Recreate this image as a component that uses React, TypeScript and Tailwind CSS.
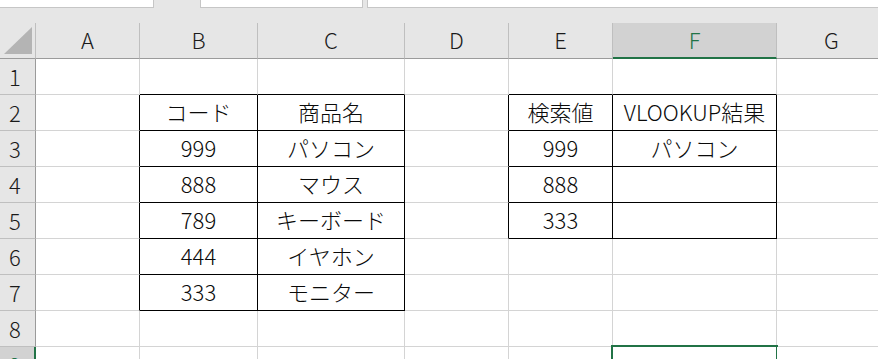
const COLS = ["A", "B", "C", "D", "E", "F", "G"];
const ROWS = [1, 2, 3, 4, 5, 6, 7, 8, 9];

const VALUES: Record<string, string> = {
  B2: "コード",
  C2: "商品名",
  B3: "999",
  C3: "パソコン",
  B4: "888",
  C4: "マウス",
  B5: "789",
  C5: "キーボード",
  B6: "444",
  C6: "イヤホン",
  B7: "333",
  C7: "モニター",
  E2: "検索値",
  F2: "VLOOKUP結果",
  E3: "999",
  F3: "パソコン",
  E4: "888",
  E5: "333",
};

// bordered ranges, column index A=0
const TABLES = [
  { c0: 1, c1: 2, r0: 2, r1: 7 },
  { c0: 4, c1: 5, r0: 2, r1: 5 },
];

const inTable = (c: number, r: number) =>
  TABLES.some((t) => c >= t.c0 && c <= t.c1 && r >= t.r0 && r <= t.r1);

const SELECTED_COL = 5;
const SELECTED_ROW = 9;

function Corner() {
  return (
    <div className="h-[36px] border-r border-b border-r-[#bfbfbf] border-b-[#9b9b9b] bg-[#e6e6e6]">
      <svg width="35" height="35" viewBox="0 0 35 35">
        <polygon points="32,4 32,31 4,31" fill="#b4b4b4" />
      </svg>
    </div>
  );
}

function ColHeader({ label, selected }: { label: string; selected: boolean }) {
  if (selected) {
    return (
      <div className="flex h-[36px] items-center justify-center border-r border-b-2 border-r-[#bfbfbf] border-b-[#217346] bg-[#d2d2d2] pb-[2px] text-[#217346]">
        {label}
      </div>
    );
  }
  return (
    <div className="flex h-[36px] items-center justify-center border-r border-b border-r-[#bfbfbf] border-b-[#9b9b9b] bg-[#e6e6e6] pb-[3px] text-[#1a1a1a]">
      {label}
    </div>
  );
}

function RowHeader({ n }: { n: number }) {
  if (n === SELECTED_ROW) {
    return (
      <div className="flex h-[36px] items-center border-r-2 border-b border-r-[#217346] border-b-[#bfbfbf] bg-[#d2d2d2] pb-[2px] pl-[9px] text-[#217346]">
        {n}
      </div>
    );
  }
  return (
    <div className="flex h-[36px] items-center border-r border-b border-r-[#9b9b9b] border-b-[#bfbfbf] bg-[#e6e6e6] pb-[2px] pl-[9px] text-[#1a1a1a]">
      {n}
    </div>
  );
}

function Cell({ c, r }: { c: number; r: number }) {
  const rightBlack = inTable(c, r) || inTable(c + 1, r);
  const bottomBlack = inTable(c, r) || inTable(c, r + 1);
  const selected = c === SELECTED_COL && r === SELECTED_ROW;
  return (
    <div
      className={`relative flex h-[36px] items-center justify-center border-r border-b bg-white pb-[3px] text-[#0a0a0a] ${
        rightBlack ? "border-r-black" : "border-r-[#d4d4d4]"
      } ${bottomBlack ? "border-b-black" : "border-b-[#d4d4d4]"}`}
    >
      {VALUES[`${COLS[c]}${r}`]}
      {selected && (
        <div className="absolute -top-[2px] -right-[2px] -left-[2px] h-[40px] border-2 border-[#217346]" />
      )}
    </div>
  );
}

export default function App() {
  return (
    <div
      className="h-[359px] w-[878px] overflow-hidden bg-[#e6e6e6] text-[22px] leading-none font-light"
      style={{ fontFamily: '"Noto Sans CJK JP", "Noto Sans", sans-serif' }}
    >
      {/* formula bar edge */}
      <div className="flex h-[8px]">
        <div className="w-[154px] border-r border-b border-[#c6c6c6] bg-white" />
        <div className="w-[46px]" />
        <div className="w-[163px] border-x border-b border-[#c6c6c6] bg-white" />
        <div className="w-[4px]" />
        <div className="flex-1 border-l border-b border-[#c6c6c6] bg-white" />
      </div>
      <div className="h-[15px]" />

      <div className="grid grid-cols-[36px_104px_118px_147px_104px_104px_164px_110px]">
        <Corner />
        {COLS.map((c, i) => (
          <ColHeader key={c} label={c} selected={i === SELECTED_COL} />
        ))}
        {ROWS.map((r) => (
          <div key={r} className="contents">
            <RowHeader n={r} />
            {COLS.map((_, c) => (
              <Cell key={c} c={c} r={r} />
            ))}
          </div>
        ))}
      </div>
    </div>
  );
}
